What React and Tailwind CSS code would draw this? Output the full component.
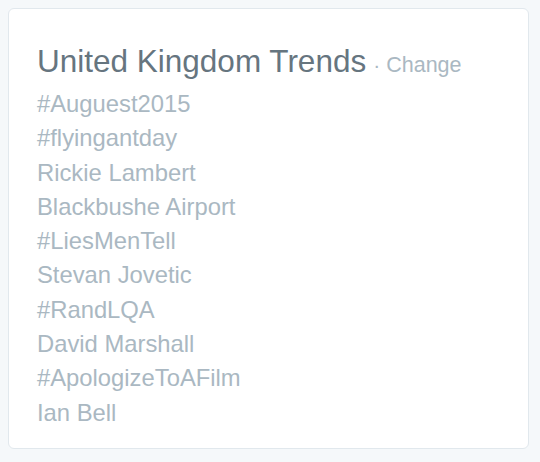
const trends = [
  '#Auguest2015',
  '#flyingantday',
  'Rickie Lambert',
  'Blackbushe Airport',
  '#LiesMenTell',
  'Stevan Jovetic',
  '#RandLQA',
  'David Marshall',
  '#ApologizeToAFilm',
  'Ian Bell',
];

export default function App() {
  return (
    <div className="w-[540px] h-[462px] bg-[#f5f8fa] pt-2 pl-2 font-['Liberation_Sans',Arial,sans-serif]">
      <div className="w-[521px] h-[441px] bg-white border border-[#e1e8ed] rounded-[6px] pl-[28px] pt-[34px]">
        {/* Header */}
        <h3 className="flex items-baseline text-[31.5px] leading-[36px] text-[#66757f]">
          United Kingdom Trends
          <span className="text-[21px] text-[#aab8c2] ml-[7px]">·</span>
          <span className="text-[21.5px] text-[#aab8c2] ml-[6px]">Change</span>
        </h3>
        <ul className="mt-[4px]">
          {trends.map((t) => (
            <li key={t} className="text-[23.8px] leading-[34.3px] text-[#aab8c2]">
              {t}
            </li>
          ))}
        </ul>
      </div>
    </div>
  );
}
